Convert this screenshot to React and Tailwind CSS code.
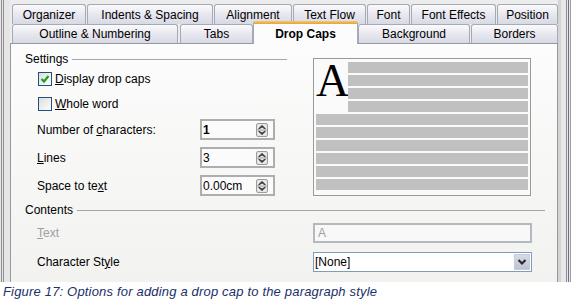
import React from 'react';

const row1 = [
  { label: 'Organizer', cls: 'w-[74px]' },
  { label: 'Indents & Spacing', cls: 'w-[126px]' },
  { label: 'Alignment', cls: 'w-[78px]' },
  { label: 'Text Flow', cls: 'w-[73px]' },
  { label: 'Font', cls: 'w-[43px]' },
  { label: 'Font Effects', cls: 'w-[85px]' },
  { label: 'Position', cls: 'w-[61px]' },
];

const tabBase =
  "flex items-center justify-center border border-b-0 border-[#a3abb4] rounded-t-[3px] bg-[linear-gradient(#fbfbfd,#e9e9f0_45%,#d7d9e5)] text-black";

function Spin() {
  return (
    <svg width="12" height="14" viewBox="0 0 12 14" className="shrink-0">
      <rect x="0.5" y="0.5" width="11" height="13" rx="1.5" fill="#e6e6e6" stroke="#9c9c9c" />
      <line x1="1" y1="7" x2="11" y2="7" stroke="#a8a8a8" />
      <path d="M2.8 5.4 L6 2.4 L9.2 5.4 L9.2 6 L6 4 L2.8 6 Z" fill="#333" stroke="#333" strokeWidth="0.8" />
      <path d="M2.8 8 L6 10 L9.2 8 L9.2 8.6 L6 11.6 L2.8 8.6 Z" fill="#333" stroke="#333" strokeWidth="0.8" />
    </svg>
  );
}

function Check({ checked }) {
  return (
    <div className="w-[14px] h-[14px] border border-[#1c5180] bg-[linear-gradient(135deg,#dcdcd7,#ffffff)] flex items-center justify-center shrink-0">
      {checked && (
        <svg width="10" height="10" viewBox="0 0 10 10">
          <path d="M1.5 5 L4 7.5 L8.5 2" fill="none" stroke="#21a121" strokeWidth="2.2" />
        </svg>
      )}
    </div>
  );
}

function NumField({ value, bold }) {
  return (
    <div className="w-[75px] h-[21px] border-2 border-[#aeaeae] bg-[#fbfbfb] flex items-center pl-[1px] pr-[5px]">
      <span className={bold ? 'flex-1 font-bold' : 'flex-1'}>{value}</span>
      <Spin />
    </div>
  );
}

function Bar({ cls }) {
  return <div className={'h-[11px] bg-[#c0c0c0] ' + cls} />;
}

export default function App() {
  return (
    <div className="w-[571px] h-[306px] bg-white font-['Liberation_Sans',Arial,sans-serif] text-[12px] text-black overflow-hidden flex flex-col">
      <div className="h-[282px] flex bg-[#ececec] shrink-0">
        {/* left frame */}
        <div className="w-[10px] flex bg-[#e6e6e6]">
          <div className="w-px ml-px bg-[#8e8e8e]" />
          <div className="w-px ml-px bg-[#8e8e8e]" />
        </div>

        {/* center */}
        <div className="w-[548px] flex flex-col">
          <div className="h-[4px]" />
          <div className="flex h-[20px] pl-[2px] gap-px">
            {row1.map((t) => (
              <div key={t.label} className={tabBase + ' h-[20px] ' + t.cls}>
                {t.label}
              </div>
            ))}
          </div>
          <div className="flex h-[19px] pl-[2px]">
            <div className={tabBase + ' h-[19px] w-[166px]'}>Outline &amp; Numbering</div>
            <div className={tabBase + ' h-[19px] w-[73px] ml-[2px]'}>Tabs</div>
            <div className="relative z-10 -mt-[3px] h-[23px] w-[105px] border-x border-[#a3abb4] bg-[#fcfcfc] rounded-t-[3px] flex flex-col">
              <div className="h-[3px] rounded-t-[3px] bg-[linear-gradient(#f7c66b,#e8a23a)] -mx-px" />
              <div className="flex-1 flex items-center justify-center font-bold pb-[1px]">Drop Caps</div>
            </div>
            <div className={tabBase + ' h-[19px] w-[112px]'}>Background</div>
            <div className={tabBase + ' h-[19px] w-[87px] ml-px'}>Borders</div>
          </div>

          {/* panel */}
          <div className="flex-1 border border-b-0 border-[#919b9c] bg-[linear-gradient(#fcfcfc,#f2f2f0)] pl-[14px] pr-[12px] pt-[8px]">
            <div className="flex">
              <div className="w-[262px]">
                <div className="flex items-center h-[14px]">
                  <span>Settings</span>
                  <div className="flex-1 ml-[4px] h-px bg-[#a6a6a6]" />
                </div>
                <div className="flex items-center h-[14px] mt-[6px] ml-[13px] gap-[3px]">
                  <Check checked />
                  <span><span className="underline">D</span>isplay drop caps</span>
                </div>
                <div className="flex items-center h-[14px] mt-[11px] ml-[13px] gap-[3px]">
                  <Check />
                  <span><span className="underline">W</span>hole word</span>
                </div>
                <div className="flex items-center h-[21px] mt-[8px] ml-[12px]">
                  <span className="w-[163px]">Number of <span className="underline">c</span>haracters:</span>
                  <NumField value="1" bold />
                </div>
                <div className="flex items-center h-[21px] mt-[7px] ml-[12px]">
                  <span className="w-[163px]"><span className="underline">L</span>ines</span>
                  <NumField value="3" />
                </div>
                <div className="flex items-center h-[21px] mt-[7px] ml-[12px]">
                  <span className="w-[163px]">Space to te<span className="underline">x</span>t</span>
                  <NumField value="0.00cm" />
                </div>
              </div>

              {/* preview */}
              <div className="ml-[26px] mt-[6px] w-[218px] h-[138px] border border-[#9a9a9a] bg-[#fafafa] pt-[3px] px-[2px] flex flex-col gap-[2px]">
                <div className="flex">
                  <div className="w-[32px] h-[50px] overflow-visible">
                    <div className="font-['Liberation_Serif','Times_New_Roman',serif] text-[46px] leading-none -mt-[4px]">A</div>
                  </div>
                  <div className="flex-1 flex flex-col gap-[2px]">
                    <Bar cls="" />
                    <Bar cls="" />
                    <Bar cls="" />
                    <Bar cls="" />
                  </div>
                </div>
                <Bar cls="" />
                <Bar cls="" />
                <Bar cls="" />
                <Bar cls="" />
                <Bar cls="" />
                <Bar cls="h-[10px]" />
              </div>
            </div>

            {/* contents */}
            <div className="flex items-center h-[14px] mt-[7px]">
              <span>Contents</span>
              <div className="flex-1 ml-[4px] h-px bg-[#a6a6a6]" />
            </div>
            <div className="flex items-center h-[20px] mt-[6px] ml-[12px]">
              <span className="w-[276px] text-[#a0a0a0]"><span className="underline">T</span>ext</span>
              <div className="w-[219px] h-[20px] border-2 border-[#b3b9be] bg-[#f8f8f8] flex items-center pl-[3px] text-[#a0a0a0]">A</div>
            </div>
            <div className="flex items-center h-[20px] mt-[9px] ml-[12px]">
              <span className="w-[276px]">Character St<span className="underline">y</span>le</span>
              <div className="w-[219px] h-[20px] border border-[#7f9db9] bg-white flex items-center pl-[1px] pr-px">
                <span className="flex-1">[None]</span>
                <div className="w-[16px] h-[16px] bg-[linear-gradient(#d6dbe6,#bcc3d3)] border border-[#c6cbd8] flex items-center justify-center">
                  <svg width="10" height="8" viewBox="0 0 10 8">
                    <path d="M1.5 2 L5 5.5 L8.5 2" fill="none" stroke="#2a2a2a" strokeWidth="2.2" />
                  </svg>
                </div>
              </div>
            </div>
          </div>
        </div>

        {/* right frame */}
        <div className="flex-1 flex bg-[#e8e8e8]">
          <div className="w-[3px] bg-[#d4d4d4]" />
          <div className="w-px ml-[5px] bg-[#8a8c98]" />
          <div className="w-px ml-px bg-[#6f7180]" />
          <div className="w-px ml-px bg-[#9a9cab]" />
        </div>
      </div>

      <div className="pl-[3px] pt-[1px] text-[13px] italic tracking-[0.18px] text-[#1b2f6a] leading-[18px]">
        Figure 17: Options for adding a drop cap to the paragraph style
      </div>
    </div>
  );
}
